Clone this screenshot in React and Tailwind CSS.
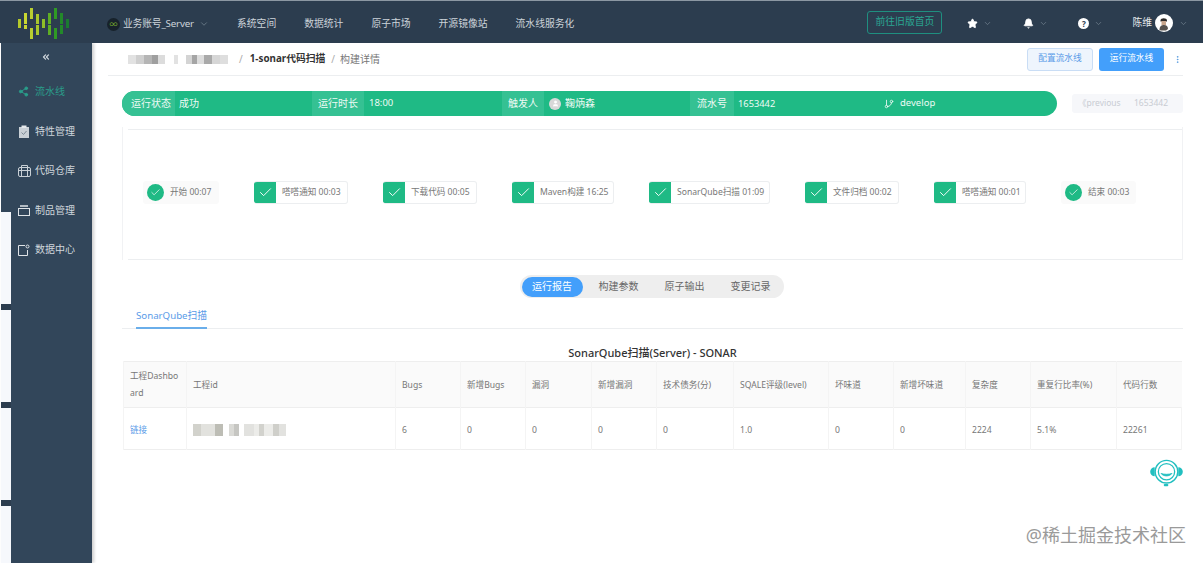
import { Share2, Check, ChevronDown, ChevronsLeft, GitBranch, Star, Bell, User, MoreVertical } from 'lucide-react'

const navLinks = ['系统空间', '数据统计', '原子市场', '开源镜像站', '流水线服务化']

const steps = [
  { label: '开始 00:07', round: true, width: 'w-[76px]' },
  { label: '嗒嗒通知 00:03', width: 'w-[94px]' },
  { label: '下载代码 00:05', width: 'w-[94px]' },
  { label: 'Maven构建 16:25', width: 'w-[102px]' },
  { label: 'SonarQube扫描 01:09', width: 'w-[121px]' },
  { label: '文件归档 00:02', width: 'w-[94px]' },
  { label: '嗒嗒通知 00:01', width: 'w-[92px]' },
  { label: '结束 00:03', round: true, width: 'w-[75px]' },
]

const tabs = ['构建参数', '原子输出', '变更记录']

const columns = [
  { title: '工程Dashboard', value: '链接', width: 'w-[63px]' },
  { title: '工程id', value: '', width: 'w-[209px]' },
  { title: 'Bugs', value: '6', width: 'w-[65px]' },
  { title: '新增Bugs', value: '0', width: 'w-[65px]' },
  { title: '漏洞', value: '0', width: 'w-[66px]' },
  { title: '新增漏洞', value: '0', width: 'w-[65px]' },
  { title: '技术债务(分)', value: '0', width: 'w-[77px]' },
  { title: 'SQALE评级(level)', value: '1.0', width: 'w-[95px]' },
  { title: '坏味道', value: '0', width: 'w-[65px]' },
  { title: '新增坏味道', value: '0', width: 'w-[72px]' },
  { title: '复杂度', value: '2224', width: 'w-[65px]' },
  { title: '重复行比率(%)', value: '5.1%', width: 'w-[86px]' },
  { title: '代码行数', value: '22261', width: 'w-[65px]' },
]

const crumbBlur = [
  ['w-[8px]', 'bg-[#e2e2e2]'], ['w-[8px]', 'bg-[#cfcfcf]'], ['w-[8px]', 'bg-[#b5b5b5]'], ['w-[6px]', 'bg-[#9f9f9f]'],
  ['w-[7px]', 'bg-[#dcdcdc]'], ['w-[9px]', 'bg-white'], ['w-[4px]', 'bg-[#e2e2e2]'], ['w-[8px]', 'bg-white'],
  ['w-[6px]', 'bg-[#d4d4d4]'], ['w-[5px]', 'bg-[#a5a5a5]'], ['w-[7px]', 'bg-[#dcdcdc]'], ['w-[8px]', 'bg-[#a9a9a9]'],
  ['w-[8px]', 'bg-[#d6d6d6]'], ['w-[8px]', 'bg-[#dedede]'],
]

const idBlur = [
  ['w-[8px]', 'bg-[#d2d2cc]'], ['w-[14px]', 'bg-[#e2e2de]'], ['w-[8px]', 'bg-[#bdbdb5]'], ['w-[6px]', 'bg-white'],
  ['w-[5px]', 'bg-[#dadad6]'], ['w-[5px]', 'bg-[#c6c6c2]'], ['w-[5px]', 'bg-white'], ['w-[10px]', 'bg-[#e2e2df]'],
  ['w-[5px]', 'bg-[#ecece9]'], ['w-[5px]', 'bg-[#d2d2cd]'], ['w-[9px]', 'bg-[#ecece9]'], ['w-[6px]', 'bg-[#cfcfca]'],
  ['w-[7px]', 'bg-[#e2e2df]'],
]

function Mosaic({ blocks, height }) {
  return (
    <div className={`flex ${height}`}>
      {blocks.map(([w, bg], i) => <span key={i} className={`${w} ${bg}`} />)}
    </div>
  )
}

function Logo() {
  const bars = [
    [0, 15, 9, '#b5c92a'], [6, 9, 11, '#c9d832'], [6, 21, 4, '#c9d832'],
    [12, 4, 11, '#b9cf30'], [12, 24, 11, '#b9cf30'], [18, 10, 10, '#a8c82c'], [18, 21, 10, '#a8c82c'],
    [24, 15, 9, '#8fbe28'], [30, 9, 11, '#5fae24'], [30, 21, 10, '#5fae24'],
    [36, 4, 11, '#2f9a24'], [36, 24, 11, '#2f9a24'], [42, 9, 11, '#23892a'], [42, 21, 9, '#23892a'],
    [48, 15, 9, '#1a7a30'],
  ]
  return (
    <svg width="54" height="36" viewBox="0 0 54 36" className="ml-[18px] shrink-0">
      {bars.map(([x, y, h, c], i) => <rect key={i} x={x} y={y} width="3" height={h} fill={c} />)}
    </svg>
  )
}

function ClipboardIcon() {
  return (
    <svg width="12" height="13" viewBox="0 0 12 13">
      <rect x="1" y="2" width="10" height="11" fill="#c9d0d6" />
      <rect x="3.500" y="0.500" width="5" height="2.500" fill="#e4e8eb" />
      <path d="M3.500 7.500l2 2 3-3.500" fill="none" stroke="#7d8a96" strokeWidth="1" />
    </svg>
  )
}

function CaseIcon() {
  return (
    <svg width="13" height="12" viewBox="0 0 13 12" fill="none" stroke="#c9d0d6">
      <rect x="0.500" y="2.500" width="12" height="9" rx="1.500" />
      <path d="M3.500 2.500v-2h6v2M3.500 2.500v9M9.500 2.500v9M0.500 5.500h12" />
    </svg>
  )
}

function TrayIcon() {
  return (
    <svg width="12" height="11" viewBox="0 0 12 11" fill="none" stroke="#dfe3e7">
      <rect x="0.500" y="3.500" width="11" height="7" />
      <path d="M2 1h8" strokeWidth="1.500" />
    </svg>
  )
}

function DataIcon() {
  return (
    <svg width="12" height="12" viewBox="0 0 12 12" fill="none" stroke="#dfe3e7">
      <path d="M7 1.500H0.500v10h9V6" />
      <circle cx="9.500" cy="2.500" r="1.500" />
    </svg>
  )
}

function UserPhoto() {
  return (
    <svg width="18" height="18" viewBox="0 0 18 18" className="ml-[3px]">
      <circle cx="9" cy="9" r="9" fill="#fff" />
      <path d="M5.500 6.500C5.500 3.500 12 3.500 12 6.500v1H5.500z" fill="#2c2a28" />
      <rect x="6.500" y="7" width="4.500" height="4" fill="#c9a68c" />
      <path d="M4.500 16c0-4 2-5 4.500-5s4 1.500 4 4l-2 1.500h-5z" fill="#57524d" />
    </svg>
  )
}

function Headset() {
  return (
    <svg width="33" height="29" viewBox="0 0 36 32" fill="none" className="absolute right-[20px] top-[416px]">
      <circle cx="18" cy="14" r="12.500" stroke="#22bfc0" strokeWidth="1.600" />
      <path d="M5 9a5 5 0 0 0 0 10zM31 9a5 5 0 0 1 0 10z" fill="#22bfc0" />
      <circle cx="18" cy="14" r="9" stroke="#22bfc0" strokeWidth="1.400" />
      <path d="M12 16c2.500 3.500 9.500 3.500 12 0-3 1.200-9 1.200-12 0z" fill="#22bfc0" stroke="#22bfc0" strokeWidth="1" />
      <rect x="15" y="27.500" width="5" height="2.500" rx="1" fill="#22bfc0" />
    </svg>
  )
}

export default function App() {
  return (
    <div
      className="w-[1203px] h-[563px] overflow-hidden bg-white text-[10px] text-[#777] flex flex-col"
      style={{ fontFamily: '"Noto Sans", "Noto Sans CJK SC", sans-serif' }}
    >
      <header className="h-[43px] shrink-0 bg-[#2c3d4f] border-t border-[#8c98a3] flex items-center text-[#cdd4da] text-[9.800px] relative z-20">
        <Logo />
        <div className="ml-[35px] pt-[4px] flex items-center w-[130px]">
          <span className="w-[13px] h-[13px] rounded-full bg-[#17222b] flex items-center justify-center text-[#7fb52e] text-[8px] leading-none">∞</span>
          <span className="ml-[3px] tracking-[-0.2px]">业务账号_Server</span>
          <ChevronDown size={10} className="ml-[5px] text-[#6f7f8d]" />
        </div>
        <nav className="flex gap-[28px] pt-[4px]">
          {navLinks.map(l => <span key={l}>{l}</span>)}
        </nav>
        <button className="ml-auto w-[75px] h-[23px] border border-[#1f8f80] rounded-[3px] text-[#2aa692]">前往旧版首页</button>
        <div className="ml-[25px] pt-[3px] flex items-center w-[56px]">
          <Star size={11} className="fill-white text-white" />
          <ChevronDown size={9} className="ml-[5px] text-[#6f7f8d]" />
        </div>
        <div className="pt-[3px] flex items-center w-[55px]">
          <Bell size={11} className="fill-white text-white" />
          <ChevronDown size={9} className="ml-[5px] text-[#6f7f8d]" />
        </div>
        <div className="pt-[3px] flex items-center w-[54px]">
          <span className="w-[11px] h-[11px] rounded-full bg-white text-[#2c3d4f] text-[8px] font-bold flex items-center justify-center leading-none">?</span>
          <ChevronDown size={9} className="ml-[5px] text-[#6f7f8d]" />
        </div>
        <div className="pt-[2px] flex items-center">
          <span className="text-[#e6e9ec]">陈维</span>
          <UserPhoto />
          <ChevronDown size={9} className="ml-[6px] mr-[15px] text-[#6f7f8d]" />
        </div>
      </header>

      <div className="flex-1 flex min-h-0">
        <aside className="relative w-[91px] shrink-0 bg-[#32465a] text-[#cfd6dc] shadow-[2px_0_3px_rgba(0,0,0,0.2)] ml-[1px] z-10">
          <div className="flex justify-center pt-[9px] h-[29px]">
            <ChevronsLeft size={10} strokeWidth={3} className="-ml-[2px]" />
          </div>
          <ul className="flex flex-col">
            <li className="h-[39.500px] flex items-center pl-[17px] text-[#2a9d8a]">
              <Share2 size={11} className="fill-current" />
              <span className="ml-[6px]">流水线</span>
            </li>
            <li className="h-[39.500px] flex items-center pl-[17px]">
              <ClipboardIcon />
              <span className="ml-[5px]">特性管理</span>
            </li>
            <li className="h-[39.500px] flex items-center pl-[17px]">
              <CaseIcon />
              <span className="ml-[4px]">代码仓库</span>
            </li>
            <li className="h-[39.500px] flex items-center pl-[17px]">
              <TrayIcon />
              <span className="ml-[5px]">制品管理</span>
            </li>
            <li className="h-[39.500px] flex items-center pl-[17px]">
              <DataIcon />
              <span className="ml-[5px]">数据中心</span>
            </li>
          </ul>
          <div className="absolute left-0 top-[169px] bottom-0 w-[10px] bg-[#f6f8fc] flex flex-col gap-[92px] pt-[92px]">
            <span className="h-[6px] w-[10px] shrink-0 bg-[#2c3d4f]" />
            <span className="h-[6px] w-[10px] shrink-0 bg-[#2c3d4f]" />
            <span className="h-[6px] w-[10px] shrink-0 bg-[#2c3d4f]" />
          </div>
        </aside>

        <main className="relative flex-1 min-w-0 pl-[30px] pr-[20px]">
          <div className="ml-[-14px] pl-[20px] h-[33px] flex items-center border-b border-[#eceef0] w-[1075px]">
            <Mosaic blocks={crumbBlur} height="h-[9px]" />
            <span className="ml-[11px] text-[#aaa]">/</span>
            <span className="ml-[7px] font-bold text-[#333] text-[9.800px]">1-sonar代码扫描</span>
            <span className="ml-[6px] text-[#aaa]">/</span>
            <span className="ml-[5px]">构建详情</span>
            <button className="ml-auto w-[66px] h-[23px] rounded-[3px] border border-[#c9ddf5] bg-[#eef5fd] text-[#5a9be8] text-[8.700px]">配置流水线</button>
            <button className="ml-[6px] w-[65px] h-[23px] rounded-[3px] bg-[#439ffb] text-white text-[8.700px]">运行流水线</button>
            <MoreVertical size={9} className="ml-[9px] mr-[1px] text-[#4b93dc]" />
          </div>

          <div className="mt-[15px] flex items-center">
            <div className="w-[935px] h-[25px] rounded-full bg-[#1fba85] text-[#eefaf5] flex items-stretch overflow-hidden">
              <div className="w-[190px] flex items-center">
                <span className="w-[53px] self-stretch bg-[#35c193] flex items-center justify-end pr-[4px]">运行状态</span>
                <span className="ml-[4px]">成功</span>
              </div>
              <div className="w-[190px] flex items-center">
                <span className="w-[52px] self-stretch bg-[#35c193] flex items-center justify-center">运行时长</span>
                <span className="ml-[5px] text-[9.500px]">18:00</span>
              </div>
              <div className="w-[188px] flex items-center">
                <span className="w-[42px] self-stretch bg-[#35c193] flex items-center justify-center">触发人</span>
                <span className="ml-[5px] w-[12px] h-[12px] rounded-full bg-[#d8d8d8] flex items-center justify-center">
                  <User size={7} className="text-white fill-white" />
                </span>
                <span className="ml-[4px]">鞠炳森</span>
              </div>
              <div className="w-[192px] flex items-center">
                <span className="w-[44px] self-stretch bg-[#35c193] flex items-center justify-center">流水号</span>
                <span className="ml-[4px] text-[9.300px]">1653442</span>
              </div>
              <div className="flex items-center pl-[2px]">
                <GitBranch size={10} />
                <span className="ml-[6px] text-[9.500px]">develop</span>
              </div>
            </div>
            <div className="ml-[15px] w-[111px] h-[19px] rounded-[3px] bg-[#f6f7fa] text-[#c8ccd3] text-[8.500px] flex items-center justify-between pl-[6px] pr-[15px]">
              <span>《previous</span>
              <span>1653442</span>
            </div>
          </div>

          <div className="mt-[11px] h-[133px] border-l border-r border-[#f1f2f4] flex flex-col w-[1061px]">
            <div className="ml-[5px] mt-[2px] flex-1 border-t border-b border-[#eceef0] flex items-center gap-[35px] pl-[15px] pb-[5px]">
              {steps.map(s => (
                s.round ? (
                  <div key={s.label} className={`${s.width} h-[23px] rounded-[3px] bg-[#fafafa] flex items-center pl-[4px] shrink-0`}>
                    <span className="w-[17px] h-[17px] rounded-full bg-[#1fba85] flex items-center justify-center shrink-0">
                      <Check size={11} strokeWidth={1.500} className="text-white" />
                    </span>
                    <span className="ml-[6px] text-[8.600px] whitespace-nowrap">{s.label}</span>
                  </div>
                ) : (
                  <div key={s.label} className={`${s.width} h-[23px] rounded-[3px] border border-l-0 border-[#eceef0] flex items-center shrink-0 overflow-hidden`}>
                    <span className="w-[22px] h-[23px] bg-[#1fba85] flex items-center justify-center shrink-0">
                      <Check size={15} strokeWidth={1.500} className="text-white" />
                    </span>
                    <span className="ml-[6px] text-[8.600px] whitespace-nowrap">{s.label}</span>
                  </div>
                )
              ))}
            </div>
          </div>

          <div className="mt-[15px] flex justify-center w-[1061px]">
            <div className="h-[23px] w-[264px] rounded-full bg-[#eeeeee] flex items-center p-[2px] -ml-[2px]">
              <span className="h-[20px] w-[61px] rounded-full bg-[#439ffb] text-white flex items-center justify-center">运行报告</span>
              <div className="flex gap-[26px] pl-[16px] text-[#666]">
                {tabs.map(t => <span key={t}>{t}</span>)}
              </div>
            </div>
          </div>

          <div className="mt-[10px] h-[21px] border-b border-[#eceef0] w-[1061px]">
            <div className="ml-[14px] w-[71px] h-[21px] border-b-2 border-[#6aaeea] text-[#5a9be8] whitespace-nowrap text-[9.700px] leading-[15px]">SonarQube扫描</div>
          </div>

          <h2 className="mt-[17px] text-center text-[#333] text-[11px] font-medium leading-[14px] w-[1061px]">SonarQube扫描(Server) - SONAR</h2>

          <table className="mt-[1px] table-fixed border-collapse w-[1059px] ml-px">
            <colgroup>
              {columns.map(c => <col key={c.title} className={c.width} />)}
            </colgroup>
            <thead>
              <tr className="h-[46px] bg-[#fafafa] border-t border-b border-[#eeeeee]">
                {columns.map(c => (
                  <th key={c.title} className="pl-[6px] pr-[7px] pt-[1px] text-left font-normal text-[8.600px] leading-[17px] break-all border-l border-[#f4f4f4]">{c.title}</th>
                ))}
              </tr>
            </thead>
            <tbody>
              <tr className="h-[42px] border-b border-[#eeeeee]">
                {columns.map((c, i) => (
                  <td key={c.title} className={`pl-[6px] pr-[7px] pt-[3px] text-[8.600px] border-l border-r border-[#f4f4f4] ${i === 0 ? 'text-[#5a9be8]' : ''}`}>
                    {i === 1 ? <Mosaic blocks={idBlur} height="h-[12px]" /> : c.value}
                  </td>
                ))}
              </tr>
            </tbody>
          </table>

          <Headset />
          <span className="absolute right-[17px] top-[479px] text-[18px] leading-[26px] text-[#9a9a9a] whitespace-nowrap">@稀土掘金技术社区</span>
        </main>
      </div>
    </div>
  )
}
